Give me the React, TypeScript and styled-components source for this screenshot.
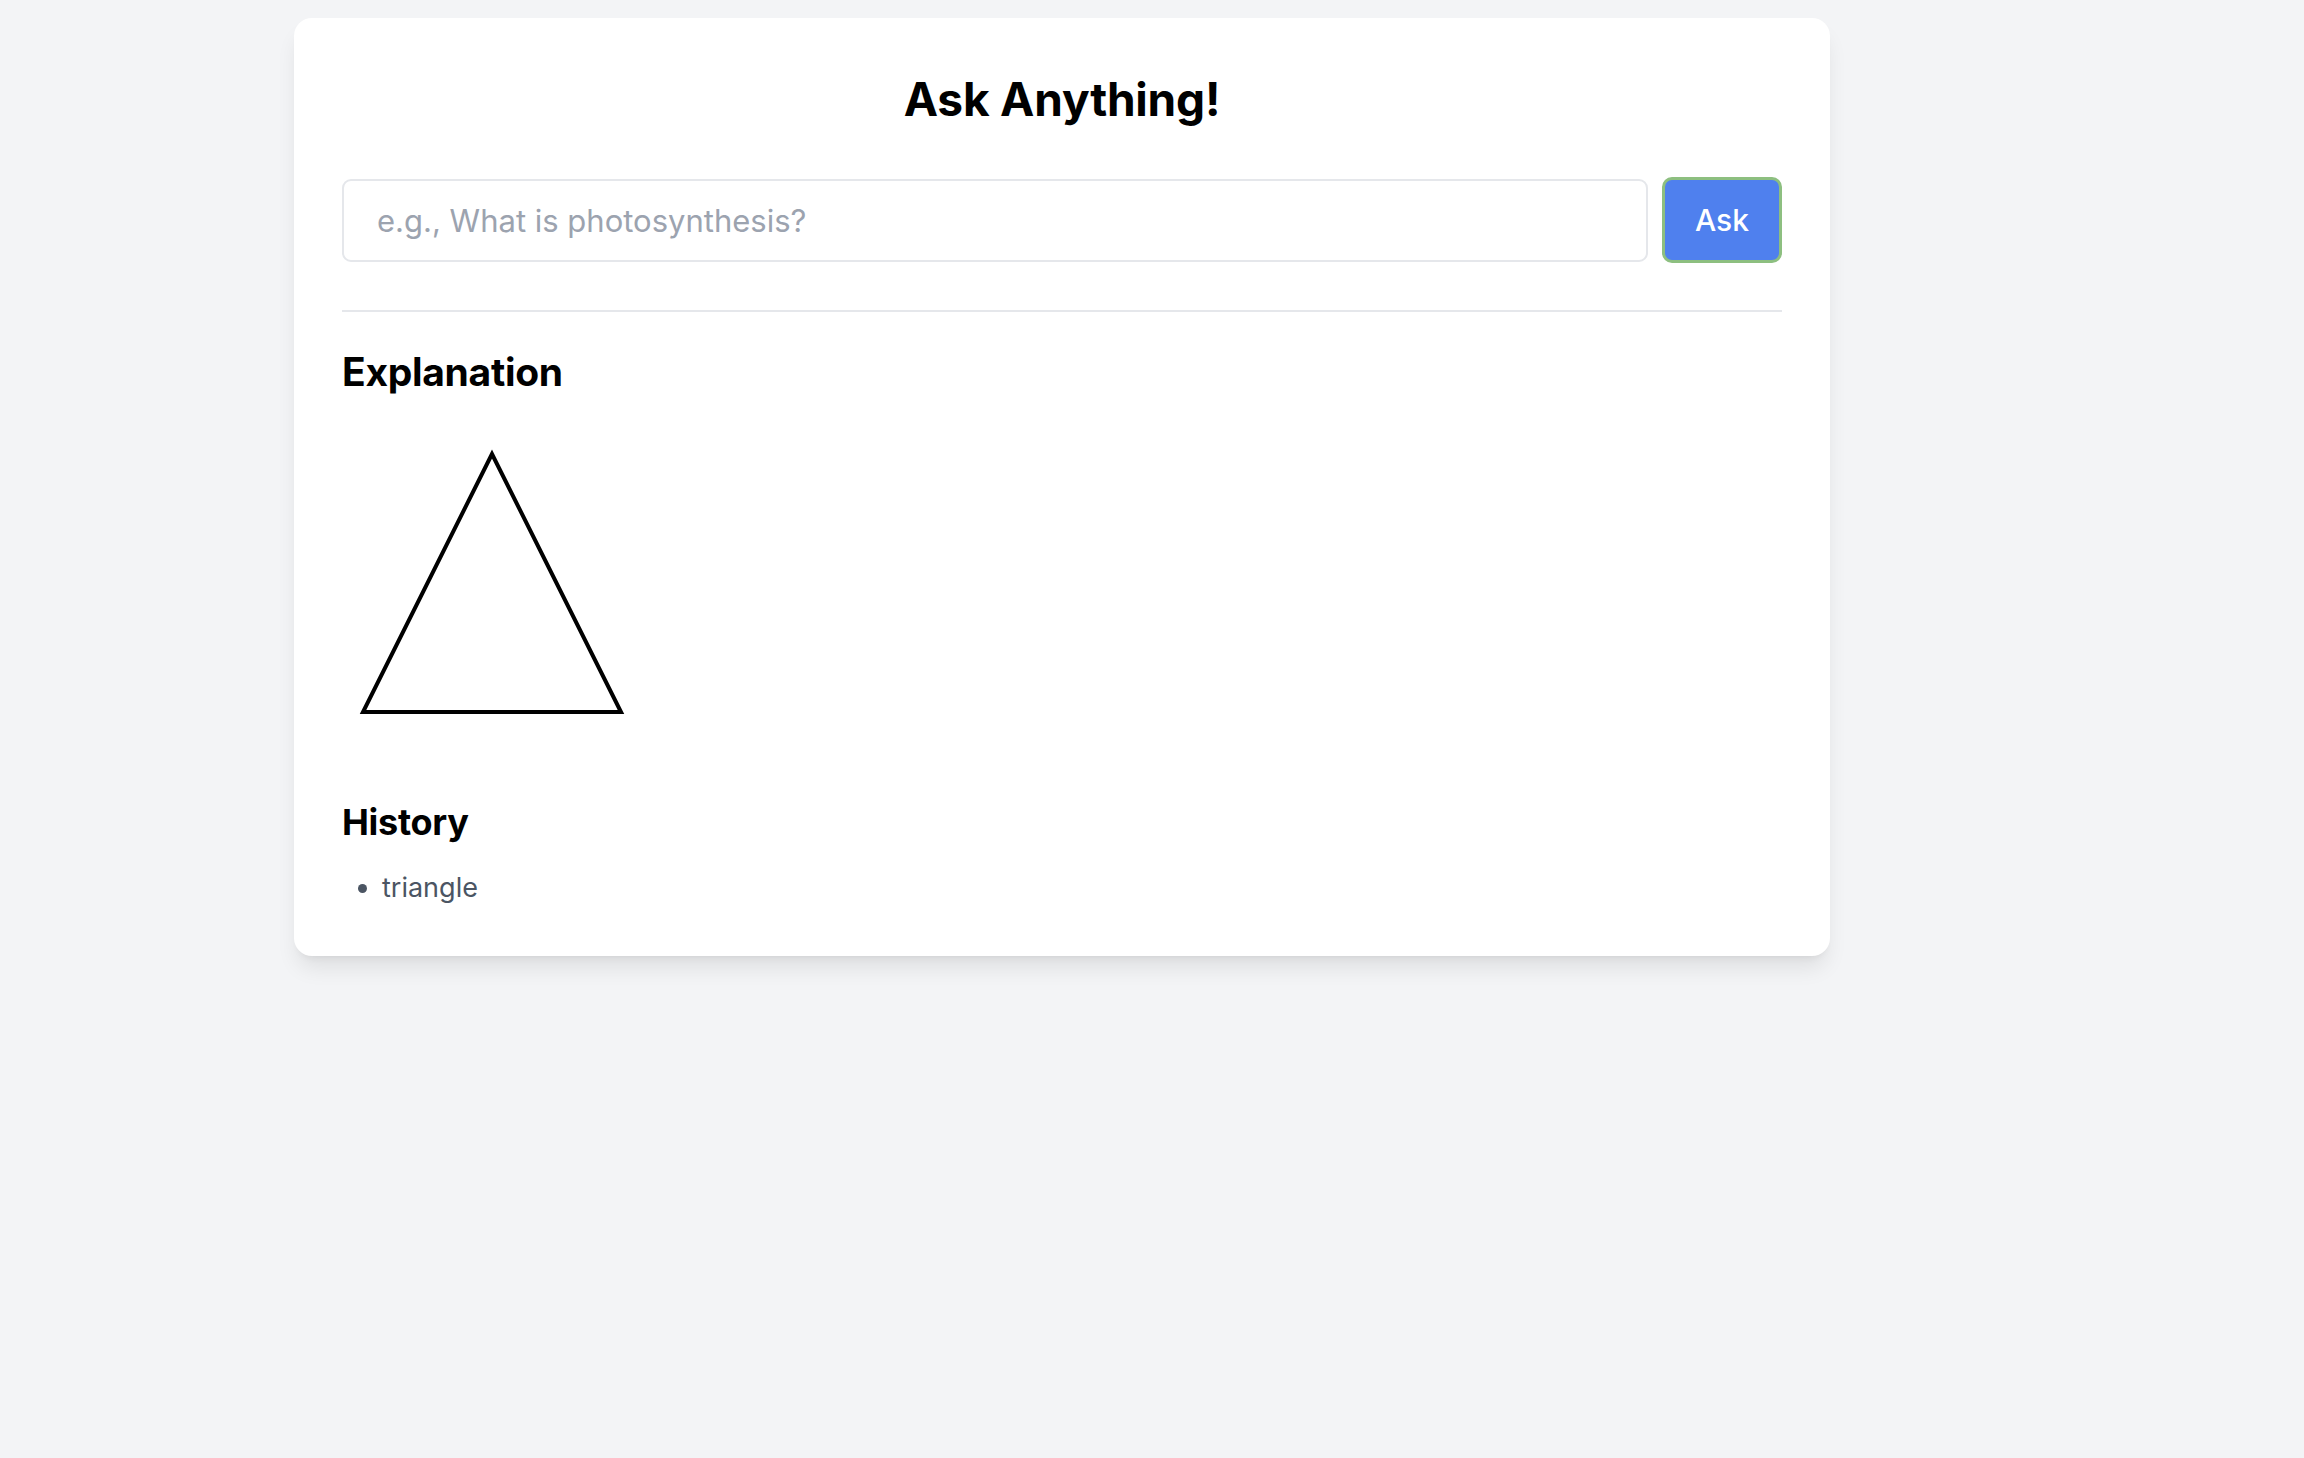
import React from "react";
import styled, { createGlobalStyle } from "styled-components";

const GlobalStyle = createGlobalStyle`
  html, body {
    margin: 0;
    padding: 0;
    background: #f3f4f6;
    font-family: Inter, "Noto Sans", "Liberation Sans", sans-serif;
    -webkit-font-smoothing: antialiased;
  }
  * { box-sizing: border-box; }
`;

const Page = styled.main`
  min-height: 1458px;
  padding: 18px 0 0 294px;
`;

const Card = styled.section`
  width: 1536px;
  background: #ffffff;
  border-radius: 18px;
  box-shadow: 0 15px 22px -4px rgba(0, 0, 0, 0.09), 0 6px 9px -6px rgba(0, 0, 0, 0.09);
  padding: 54px 48px 48px;
  display: flex;
  flex-direction: column;
`;

const Title = styled.h1`
  margin: 0 0 51px;
  text-align: center;
  font-size: 46px;
  line-height: 54px;
  font-weight: 700;
  color: #000;
  letter-spacing: -0.2px;
`;

const AskRow = styled.form`
  display: flex;
  align-items: center;
  gap: 14px;
  margin: 0;
`;

const QuestionInput = styled.input`
  flex: 1;
  height: 83px;
  border: 2px solid #e5e7eb;
  border-radius: 9px;
  padding: 0 33px;
  font-family: inherit;
  font-size: 31px;
  color: #111827;
  outline: none;
  background: #fff;
  &::placeholder {
    color: #9ca3af;
  }
`;

const AskButton = styled.button`
  width: 120px;
  height: 86px;
  border: 3px solid #8dbf80;
  border-radius: 10px;
  background: #4f80ee;
  color: #ffffff;
  font-family: inherit;
  font-size: 30px;
  font-weight: 500;
  cursor: pointer;
`;

const Divider = styled.hr`
  margin: 47px 0 0;
  border: none;
  border-top: 2px solid #e5e7eb;
`;

const SectionTitle = styled.h2<{ $size: number; $gap: number }>`
  margin: ${(p) => p.$gap}px 0 0;
  font-size: ${(p) => p.$size}px;
  line-height: 48px;
  font-weight: 700;
  color: #000;
  letter-spacing: -0.3px;
`;

const Figure = styled.div`
  margin-top: 24px;
  width: 300px;
  height: 300px;
  svg { display: block; }
`;

const HistoryList = styled.ul`
  margin: 22px 0 0;
  padding: 0 0 0 40px;
  list-style: disc;
  color: #4b5563;
  font-size: 27px;
  line-height: 40px;
`;

export default function App() {
  return (
    <>
      <GlobalStyle />
      <Page>
        <Card>
          <Title>Ask Anything!</Title>
          <AskRow onSubmit={(e) => e.preventDefault()}>
            <QuestionInput placeholder="e.g., What is photosynthesis?" />
            <AskButton type="submit">Ask</AskButton>
          </AskRow>
          <Divider />
          <SectionTitle $size={39} $gap={36}>Explanation</SectionTitle>
          <Figure>
            <svg width="300" height="300" viewBox="0 0 300 300">
              <polygon
                points="150,34 21,292 279,292"
                fill="none"
                stroke="#000"
                strokeWidth="4"
              />
            </svg>
          </Figure>
          <SectionTitle $size={36} $gap={78}>History</SectionTitle>
          <HistoryList>
            <li>triangle</li>
          </HistoryList>
        </Card>
      </Page>
    </>
  );
}
